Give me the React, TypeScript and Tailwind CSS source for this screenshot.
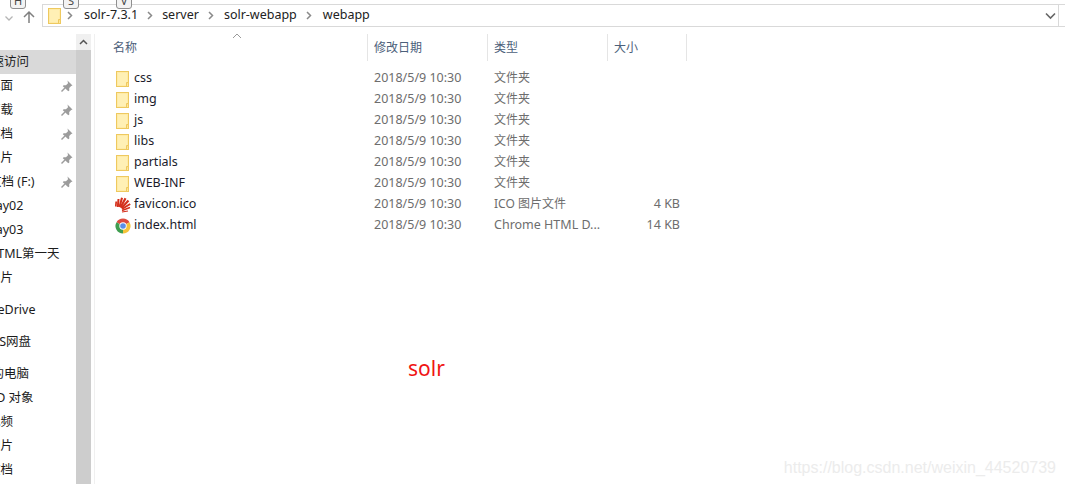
import React from "react";

const font = { fontFamily: '"Noto Sans", "Noto Sans CJK SC", sans-serif' };

const navItems = [
  { label: "快速访问", offset: "-ml-[21px]", row: "h-[24px] bg-[#d9d9d9]", pin: false },
  { label: "桌面", offset: "-ml-[12px]", row: "h-[24px]", pin: true },
  { label: "下载", offset: "-ml-[12px]", row: "h-[24px]", pin: true },
  { label: "文档", offset: "-ml-[12px]", row: "h-[24px]", pin: true },
  { label: "图片", offset: "-ml-[12px]", row: "h-[24px]", pin: true },
  { label: "文档 (F:)", offset: "-ml-[11px]", row: "h-[24px]", pin: true },
  { label: "day02", offset: "-ml-[12px]", row: "h-[24px]", pin: false },
  { label: "day03", offset: "-ml-[12px]", row: "h-[24px]", pin: false },
  { label: "HTML第一天", offset: "-ml-[12px]", row: "h-[24px]", pin: false },
  { label: "图片", offset: "-ml-[12px]", row: "h-[24px] mb-[8px]", pin: false },
  { label: "OneDrive", offset: "-ml-[20px]", row: "h-[24px] mb-[8px]", pin: false },
  { label: "WPS网盘", offset: "-ml-[20px]", row: "h-[24px] mb-[8px]", pin: false },
  { label: "我的电脑", offset: "-ml-[21px]", row: "h-[24px]", pin: false },
  { label: "3D 对象", offset: "-ml-[11px]", row: "h-[24px]", pin: false },
  { label: "视频", offset: "-ml-[12px]", row: "h-[24px]", pin: false },
  { label: "图片", offset: "-ml-[12px]", row: "h-[24px]", pin: false },
  { label: "文档", offset: "-ml-[12px]", row: "h-[24px]", pin: false },
];

const files = [
  { name: "css", type: "文件夹", typeSize: "text-[12px] pb-[2px]", size: "", icon: "folder" },
  { name: "img", type: "文件夹", typeSize: "text-[12px] pb-[2px]", size: "", icon: "folder" },
  { name: "js", type: "文件夹", typeSize: "text-[12px] pb-[2px]", size: "", icon: "folder" },
  { name: "libs", type: "文件夹", typeSize: "text-[12px] pb-[2px]", size: "", icon: "folder" },
  { name: "partials", type: "文件夹", typeSize: "text-[12px] pb-[2px]", size: "", icon: "folder" },
  { name: "WEB-INF", type: "文件夹", typeSize: "text-[12px] pb-[2px]", size: "", icon: "folder" },
  { name: "favicon.ico", type: "ICO 图片文件", typeSize: "text-[12px] pb-[2px]", size: "4 KB", icon: "solr" },
  { name: "index.html", type: "Chrome HTML D...", typeSize: "text-[12.500px]", size: "14 KB", icon: "chrome" },
];

function Folder() {
  return (
    <svg width="16" height="16" viewBox="0 0 16 16" className="shrink-0">
      <rect x="1.500" y="0.500" width="12" height="15" fill="#ffeba6" stroke="#eec95f" />
      <rect x="3" y="2" width="9" height="12" fill="#fff0b5" />
      <path d="M11.500 15.500v-4h2" fill="#ffe08a" stroke="#eec95f" />
    </svg>
  );
}

function SolrIcon() {
  return (
    <svg width="16" height="16" viewBox="0 0 16 16" className="shrink-0">
      <g stroke="#d4301c" fill="none">
        <path d="M0.800 9.500 L1.200 4.500" strokeWidth="1.700" />
        <path d="M2.800 10 L3.500 2" strokeWidth="2" />
        <path d="M4.500 10 L7 0.800" strokeWidth="2.100" />
        <path d="M5.500 10.500 L10.500 1.200" strokeWidth="2.200" />
        <path d="M6.500 11 L13.500 3.500" strokeWidth="2.200" />
        <path d="M7 12 L15.200 7" strokeWidth="2" />
        <path d="M7 13.500 L15 10.500" strokeWidth="1.600" />
        <path d="M7 15 L13 14" strokeWidth="1.200" />
      </g>
    </svg>
  );
}

function ChromeIcon() {
  return (
    <svg width="16" height="16" viewBox="0 0 16 16" className="shrink-0">
      <path d="M8 8 L1.500 4.200 A7.500 7.500 0 0 1 14.500 4.200 Z" fill="#dd4b3e" />
      <path d="M8 8 L14.500 4.200 A7.500 7.500 0 0 1 8 15.500 Z" fill="#f5c33b" />
      <path d="M8 8 L8 15.500 A7.500 7.500 0 0 1 1.500 4.200 Z" fill="#3f9e50" />
      <circle cx="8" cy="8" r="3.700" fill="#ffffff" />
      <circle cx="8" cy="8" r="2.800" fill="#5a8fe8" />
    </svg>
  );
}

function Pin() {
  return (
    <svg width="12" height="12" viewBox="0 0 12 12">
      <path d="M6.500 0.500l5 5-1.300.5-2 2 .1 2.400-1 .8L1.800 6.200l.8-1 2.400.1 2-2z" fill="#9c9c9c" />
      <path d="M4 8l-3.500 3.500" stroke="#9c9c9c" strokeWidth="1.400" />
    </svg>
  );
}

function Crumb() {
  return (
    <svg width="6" height="9" viewBox="0 0 6 9" className="shrink-0">
      <path d="M1 1l3.500 3.500L1 8" fill="none" stroke="#8a8a8a" strokeWidth="1.500" />
    </svg>
  );
}

function KeyTip({ label, className }: { label: string; className: string }) {
  return (
    <div
      className={`absolute top-[-9px] h-[18px] w-[16px] rounded-[3px] border border-[#8f8f8f] bg-[#f3f3f3] text-center text-[11px] leading-[18px] text-[#444] ${className}`}
    >
      {label}
    </div>
  );
}

export default function App() {
  return (
    <div className="relative flex h-[484px] w-[1065px] flex-col overflow-hidden bg-white" style={font}>
      <KeyTip label="H" className="left-[10px]" />
      <KeyTip label="S" className="left-[63px]" />
      <KeyTip label="V" className="left-[116px]" />

      <div className="flex h-[34px] items-start pt-[4px]">
        <div className="flex h-[23px] w-[42px] shrink-0 items-center pl-[4px] pt-[2px]">
          <svg width="10" height="10" viewBox="0 0 10 10" className="mt-[2px]">
            <path d="M1.500 3.500L5 7l3.500-3.500" fill="none" stroke="#b5b5b5" strokeWidth="1.300" />
          </svg>
          <svg width="14" height="14" viewBox="0 0 14 14" className="ml-[8px]">
            <path d="M7 13V2M2 7l5-5 5 5" fill="none" stroke="#808080" strokeWidth="1.500" />
          </svg>
        </div>
        <div className="flex h-[23px] w-[1023px] items-center border-y border-l border-[#d9d9d9] pl-[4px] text-[12.500px] text-[#222]">
          <Folder />
          <span className="ml-[4px]"><Crumb /></span>
          <span className="ml-[11px]">solr-7.3.1</span>
          <span className="ml-[9px]"><Crumb /></span>
          <span className="ml-[9px]">server</span>
          <span className="ml-[9px]"><Crumb /></span>
          <span className="ml-[10px]">solr-webapp</span>
          <span className="ml-[9px]"><Crumb /></span>
          <span className="ml-[11px]">webapp</span>
          <svg width="11" height="8" viewBox="0 0 11 8" className="ml-auto mr-[1px]">
            <path d="M1 1.500L5.500 6 10 1.500" fill="none" stroke="#666" strokeWidth="1.600" />
          </svg>
          <div className="ml-[1px] h-full w-[7px] border-l border-[#d9d9d9]" />
        </div>
      </div>

      <div className="flex min-h-0 flex-1">
        <div className="w-[76px] shrink-0 overflow-hidden pt-[16px] text-[12.500px] text-[#1c1c1c]">
          {navItems.map((item, i) => (
            <div key={i} className={`flex items-center justify-between pr-[3px] ${item.row}`}>
              <span className={`whitespace-nowrap ${item.offset}`}>{item.label}</span>
              {item.pin && <Pin />}
            </div>
          ))}
        </div>

        <div className="flex w-[15px] shrink-0 flex-col bg-[#cdcdcd]">
          <div className="flex h-[16px] items-center justify-center bg-[#f0f0f0]">
            <svg width="9" height="6" viewBox="0 0 9 6">
              <path d="M1 5l3.500-3.500L8 5" fill="none" stroke="#555" strokeWidth="1.500" />
            </svg>
          </div>
        </div>
        <div className="ml-[3px] w-px shrink-0 bg-[#f0f0f0]" />

        <div className="relative min-w-0 flex-1 pl-[13px]">
          <svg width="10" height="6" viewBox="0 0 10 6" className="absolute left-[137px] top-[-1px]">
            <path d="M1 5l4-4 4 4" fill="none" stroke="#9a9a9a" strokeWidth="1" />
          </svg>
          <div className="flex h-[27px] text-[12px] text-[#4c607a]">
            <div className="flex w-[259px] items-center pl-[5px]">名称</div>
            <div className="flex w-[120px] items-center border-l border-[#e5e5e5] pl-[6px]">修改日期</div>
            <div className="flex w-[120px] items-center border-l border-[#e5e5e5] pl-[6px]">类型</div>
            <div className="flex w-[80px] items-center border-x border-[#e5e5e5] pl-[6px]">大小</div>
          </div>
          <div className="pt-[7px] text-[12.500px]">
            {files.map((file) => (
              <div key={file.name} className="flex h-[21px] items-center">
                <div className="flex w-[259px] items-center gap-[3px] pl-[7px] text-[#1b1b2b]">
                  {file.icon === "folder" && <Folder />}
                  {file.icon === "solr" && <SolrIcon />}
                  {file.icon === "chrome" && <ChromeIcon />}
                  <span>{file.name}</span>
                </div>
                <div className="w-[120px] pl-[7px] text-[#6d6d6d]">2018/5/9 10:30</div>
                <div className={`w-[120px] pl-[7px] whitespace-nowrap text-[#6d6d6d] ${file.typeSize}`}>{file.type}</div>
                <div className="w-[73px] text-right text-[#6d6d6d]">{file.size}</div>
              </div>
            ))}
          </div>
        </div>
      </div>

      <div className="absolute left-[408px] top-[354px] text-[21px] leading-[28px] text-[#f01414]">solr</div>
      <div
        className="absolute right-[9px] top-[456px] text-[16px] text-[#ececec]"
        style={{ fontFamily: '"Liberation Sans", sans-serif' }}
      >
        https://blog.csdn.net/weixin_44520739
      </div>
    </div>
  );
}
